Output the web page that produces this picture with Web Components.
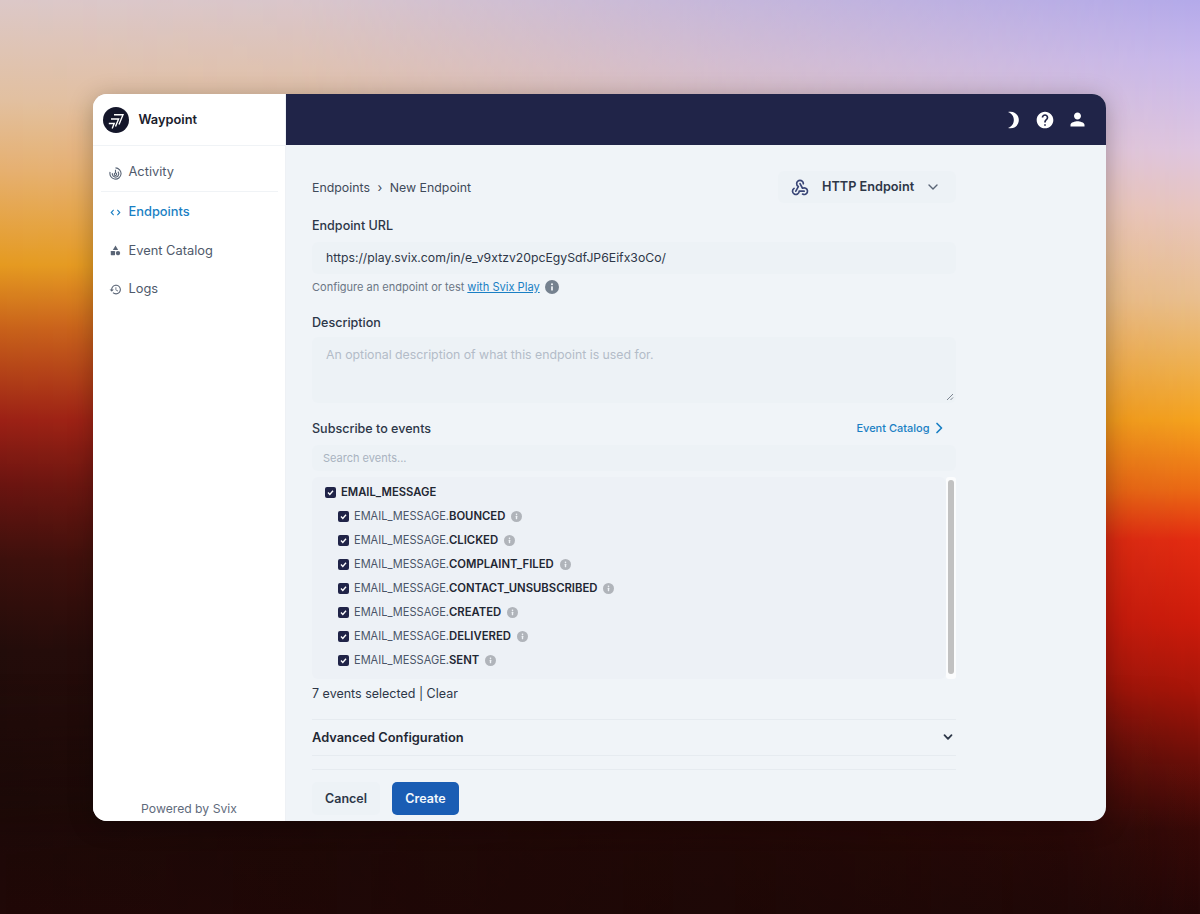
<!DOCTYPE html>
<html lang="en"><head><meta charset="utf-8"><title>Waypoint</title>
<style>
html,body{margin:0;height:914px;overflow:hidden}
body{font-family:Inter,"Liberation Sans",sans-serif;background:#1c0a08}
</style></head><body>
<wp-desktop>
  <wp-window>
    <wp-sidebar slot="side">
      <wp-nav-item icon="activity">Activity</wp-nav-item>
      <wp-nav-item icon="code" active>Endpoints</wp-nav-item>
      <wp-nav-item icon="catalog">Event Catalog</wp-nav-item>
      <wp-nav-item icon="history">Logs</wp-nav-item>
    </wp-sidebar>
    <wp-topbar slot="top"></wp-topbar>
    <wp-endpoint-form slot="main">
      <wp-event-row head name="EMAIL_MESSAGE"></wp-event-row>
      <wp-event-row name="BOUNCED"></wp-event-row>
      <wp-event-row name="CLICKED"></wp-event-row>
      <wp-event-row name="COMPLAINT_FILED"></wp-event-row>
      <wp-event-row name="CONTACT_UNSUBSCRIBED"></wp-event-row>
      <wp-event-row name="CREATED"></wp-event-row>
      <wp-event-row name="DELIVERED"></wp-event-row>
      <wp-event-row name="SENT"></wp-event-row>
    </wp-endpoint-form>
  </wp-window>
</wp-desktop>
<script>
const ICONS={
 activity:'<svg viewBox="0 0 14 14" fill="none" stroke="currentColor" stroke-width="1.2"><path d="M7 1a6 6 0 1 1-5.8 4.4"/><path d="M3.6 6.6a3.5 3.5 0 1 0 6-1.6"/><circle cx="7" cy="7.8" r="1.3"/><path d="M7 6.5V3"/></svg>',
 code:'<svg viewBox="0 0 14 14" fill="none" stroke="currentColor" stroke-width="1.4"><path d="M4.6 3.8 1.6 7l3 3.2M9.4 3.8l3 3.2-3 3.2"/></svg>',
 catalog:'<svg viewBox="0 0 14 14" fill="currentColor"><path d="M7 .6 10.4 6.4H3.6z"/><rect x="1" y="7.6" width="5.4" height="5.4" rx=".6"/><circle cx="10.2" cy="10.3" r="2.8"/></svg>',
 history:'<svg viewBox="0 0 24 24" fill="currentColor"><path d="M13 3c-4.97 0-9 4.03-9 9H1l3.89 3.89.07.14L9 12H6c0-3.87 3.13-7 7-7s7 3.13 7 7-3.13 7-7 7c-1.93 0-3.68-.79-4.94-2.06l-1.42 1.42C8.27 19.99 10.51 21 13 21c4.97 0 9-4.03 9-9s-4.03-9-9-9zm-1 5v5l4.28 2.54.72-1.21-3.5-2.08V8H12z"/></svg>',
 moon:'<svg viewBox="0 0 24 24" fill="currentColor"><path d="M9 2c-1.05 0-2.05.16-3 .46 4.06 1.27 7 5.06 7 9.54 0 4.48-2.94 8.27-7 9.54.95.3 1.95.46 3 .46 5.52 0 10-4.48 10-10S14.52 2 9 2z"/></svg>',
 help:'<svg viewBox="0 0 24 24" fill="currentColor"><path d="M12 2C6.48 2 2 6.48 2 12s4.48 10 10 10 10-4.48 10-10S17.52 2 12 2zm1 17h-2v-2h2v2zm2.07-7.75l-.9.92C13.45 12.9 13 13.5 13 15h-2v-.5c0-1.1.45-2.1 1.17-2.83l1.24-1.26c.37-.36.59-.86.59-1.41 0-1.1-.9-2-2-2s-2 .9-2 2H8c0-2.21 1.79-4 4-4s4 1.79 4 4c0 .88-.36 1.68-.93 2.25z"/></svg>',
 person:'<svg viewBox="0 0 24 24" fill="currentColor"><path d="M12 12c2.21 0 4-1.79 4-4s-1.79-4-4-4-4 1.79-4 4 1.79 4 4 4zm0 2c-2.67 0-8 1.34-8 4v2h16v-2c0-2.66-5.33-4-8-4z"/></svg>',
 webhook:'<svg viewBox="0 0 24 24" fill="none" stroke="currentColor" stroke-width="2" stroke-linecap="round" stroke-linejoin="round"><path d="M4.876 13.61a4 4 0 1 0 6.124 3.39h6"/><path d="M15.066 20.502a4 4 0 1 0 1.934-7.502c-.706 0-1.424.179-2 .5l-3-5.5"/><path d="M16 8a4 4 0 1 0-8 0c0 1.506.77 2.818 2 3.5l-3 5.5"/></svg>',
 down:'<svg viewBox="0 0 12 12" fill="none" stroke="currentColor" stroke-width="1.4" stroke-linecap="round" stroke-linejoin="round"><path d="M2 4l4 4 4-4"/></svg>',
 down2:'<svg viewBox="0 0 12 12" fill="none" stroke="currentColor" stroke-width="1.8" stroke-linecap="round" stroke-linejoin="round"><path d="M2.5 4.2 6 7.8l3.5-3.6"/></svg>',
 right:'<svg viewBox="0 0 12 12" fill="none" stroke="currentColor" stroke-width="1.7" stroke-linecap="round" stroke-linejoin="round"><path d="M4 1.5 8.5 6 4 10.5"/></svg>',
 info:'<svg viewBox="0 0 16 16"><circle cx="8" cy="8" r="8" fill="currentColor"/><rect x="7" y="7" width="2" height="5" rx=".6" fill="#f0f4f8"/><circle cx="8" cy="4.8" r="1.2" fill="#f0f4f8"/></svg>',
 logo:'<svg viewBox="0 0 26 26"><circle cx="13" cy="13" r="13" fill="#14162a"/><g fill="none" stroke="#fff" stroke-width="1.4" stroke-linejoin="miter"><path d="M11 7.8H20L16 17.5"/><path d="M8 12H15.6L12.5 19.5"/><path d="M5.8 16.5H11.2L9.2 21.5"/></g></svg>'
};
class Base extends HTMLElement{
  constructor(){super();this.attachShadow({mode:'open'});}
  render(css,html){this.shadowRoot.innerHTML='<style>'+css+'</style>'+html;}
}
class WpDesktop extends Base{connectedCallback(){this.render(`
 :host{display:block;position:relative;width:1200px;height:914px;box-sizing:border-box;padding:94px 94px 93px 93px;overflow:hidden;
  background:linear-gradient(to bottom,#b4aaea 0,#c8b8ec 60px,#dfc6e0 150px,#e8c6c0 210px,#e9bf8e 300px,#efb04c 370px,#f5a31e 420px,#ec6a15 490px,#e42c12 540px,#cf1c0c 620px,#a8160a 690px,#6e100a 760px,#380a08 830px,#240808 914px)}
 :host::before{content:"";position:absolute;inset:0;
  background:linear-gradient(to bottom,#dcc8c8 0,#e2c0a0 100px,#e6b070 170px,#e59a20 265px,#c8601a 330px,#9c2015 420px,#6a1410 485px,#3c100c 560px,#220c0a 650px,#1c0a08 800px,#240808 914px);
  -webkit-mask-image:linear-gradient(to right,#000 0,rgba(0,0,0,.92) 25%,rgba(0,0,0,.45) 60%,transparent 100%);mask-image:linear-gradient(to right,#000 0,rgba(0,0,0,.92) 25%,rgba(0,0,0,.45) 60%,transparent 100%)}
 :host::after{content:"";position:absolute;left:0;right:0;bottom:0;height:240px;
  background:linear-gradient(to left,transparent 0,rgba(28,8,6,.55) 12%,rgba(28,8,6,.75) 40%,rgba(28,8,6,.5) 100%);
  -webkit-mask-image:linear-gradient(to top,#000 25%,transparent 100%);mask-image:linear-gradient(to top,#000 25%,transparent 100%)}
 ::slotted(*){position:relative;z-index:1}
`,'<slot></slot>');}}
class WpWindow extends Base{connectedCallback(){this.render(`
 :host{display:grid;grid-template-columns:193px 1fr;grid-template-rows:51px 1fr;height:727px;border-radius:14px;overflow:hidden;background:#f0f4f8;box-shadow:0 4px 24px rgba(0,0,0,.28)}
 .s{grid-row:1/3;display:block}.s,.t,.m{min-height:0;min-width:0}
`,'<div class="s" part="s"><slot name="side"></slot></div><div class="t"><slot name="top"></slot></div><div class="m"><slot name="main"></slot></div>');}}
class WpSidebar extends Base{connectedCallback(){this.render(`
 :host{display:flex;flex-direction:column;height:727px;background:#fff;box-sizing:border-box;border-right:1px solid #eef1f5;color:#4a5568}
 .brand{height:52px;box-sizing:border-box;border-bottom:1px solid #f0f3f6;display:flex;align-items:center;gap:9.5px;padding:0 0 0 10px;font-size:12.8px;font-weight:600;color:#1a202c;flex:none}
 .brand svg{width:26px;height:26px;display:block}
 nav{display:flex;flex-direction:column;padding:7px 0 0;flex:1}
 footer{font-size:12.2px;color:#5f6b7c;text-align:center;height:25px;line-height:25px;flex:none}
`,`<div class="brand">${ICONS.logo}<span>Waypoint</span></div><nav><slot></slot></nav><footer>Powered by Svix</footer>`);}}
class WpNavItem extends Base{connectedCallback(){const a=this.hasAttribute('active');const k=this.getAttribute('icon');const first=k==='activity';const s=first||k==='history'?13:11;this.render(`
 :host{display:block;margin:0 7px 0 8px}
 .i{display:flex;align-items:center;height:${first?'39px':'38.5px'};box-sizing:border-box;gap:7.5px;padding-left:9px;padding-top:${first?0:2}px;font-size:12.85px;line-height:20px;color:${a?'#1a7fc4':'#4f5a6b'};${first?'border-bottom:1px solid #f0f3f6;':''}font-weight:${a?500:400}}
 .g{width:11px;height:11px;display:flex;align-items:center;justify-content:center;margin-top:${first?2:0}px;color:${a?'#1a7fc4':'#5a6576'}}
 .g svg{width:${s}px;height:${s}px;flex:none;display:block}
`,`<div class="i"><span class="g">${ICONS[k]}</span><slot></slot></div>`);}}
class WpTopbar extends Base{connectedCallback(){this.render(`
 :host{display:flex;height:51px;align-items:center;justify-content:flex-end;background:#202448;color:#fff;padding-right:18px;gap:12px}
 span{display:block;width:20px;height:20px}svg{display:block;width:100%;height:100%}
 .p{width:21px;height:21px}
`,`<span>${ICONS.moon}</span><span>${ICONS.help}</span><span class="p">${ICONS.person}</span>`);}}
class WpEventRow extends Base{connectedCallback(){const h=this.hasAttribute('head');const n=this.getAttribute('name');this.render(`
 :host{display:flex;align-items:center;height:24px;padding-left:${h?13:26}px;font-size:11px;color:#4a5568;white-space:nowrap}
 .c{width:11px;height:11px;border-radius:2px;background:#202448;display:flex;flex:none;margin-right:5px}
 .c svg{width:11px;height:11px;display:block}
 b{font-weight:600;color:#1f2733;font-size:11.3px}
 .t{font-weight:${h?600:400};color:${h?'#1f2733':'#4a5568'};font-size:${h?'11.25px':'11.05px'}}
 .n{width:11px;height:11px;margin-left:6px;color:#b0b4ba;flex:none}.n svg{display:block;width:100%;height:100%}
`,`<span class="c"><svg viewBox="0 0 11 11" fill="none" stroke="#fff" stroke-width="1.4"><path d="M3 5.6 4.8 7.4 8 3.8"/></svg></span>`+
 (h?`<span class="t">${n}</span>`:`<span class="t">EMAIL_MESSAGE.<b>${n}</b></span><span class="n">${ICONS.info}</span>`));}}
class WpEndpointForm extends Base{connectedCallback(){this.render(`
 :host{display:block;height:676px;overflow:hidden;padding:26px 150px 0 26px;box-sizing:border-box;color:#2d3748;font-size:13px}
 .row{display:flex;align-items:center;justify-content:space-between}
 .crumb{font-size:12.35px;color:#3f4a5a;display:flex;gap:7.5px;align-items:center}
 .type{width:178px;height:32px;box-sizing:border-box;background:#edf2f6;border-radius:6px;display:flex;align-items:center;padding-left:12px;font-weight:600;font-size:12.7px;color:#2d3748}
 .type b{font-weight:600;margin-top:-2px}
 .type .w{width:20px;height:20px;color:#3a4677;margin-right:12px}.type .d{width:12px;height:12px;margin-left:13px;color:#5a6576}
 svg{display:block;width:100%;height:100%}
 label,.label{display:block;height:20px;line-height:22px;font-weight:500;font-size:12.55px;color:#2d3748}
 .box{background:#edf2f6;border-radius:6px;padding-left:14px;box-sizing:border-box}
 .url{height:32px;line-height:32px;margin-top:7px;font-size:12.25px;color:#2d3748}
 .help{height:16px;line-height:16px;margin-top:5px;font-size:11px;color:#6b7685;display:flex;align-items:center}
 .help a{color:#1a7fc4;text-decoration:underline;margin-left:3px;font-size:11.1px}
 .help i{width:14px;height:14px;margin-left:5px;color:#75818f;display:block}
 .ta{height:66px;margin-top:5px;padding-top:9px;line-height:18px;font-size:12.3px;color:#b3bcc8;position:relative}
 .grip{position:absolute;right:2px;bottom:2px;width:8px;height:8px}
 .search{height:26px;margin-top:7px;padding-left:11px;line-height:26px;font-size:11px;color:#a9b3c0}
 .link{color:#1a7fc4;font-size:11px;display:flex;align-items:center;font-weight:500;gap:3.5px;padding-right:11px}
 .link span{width:12px;height:12px;display:block}
 .listwrap{display:flex;height:202px;margin-top:6px}
 .list{flex:1;background:#edf1f6;border-radius:6px;padding-top:3px;min-width:0;box-sizing:border-box}
 .track{width:10px;background:#fbfcfd;border-radius:3px;padding:3px 2px 5px;box-sizing:border-box;display:flex}
 .thumb{width:6px;background:#c1c1c1;border-radius:3px;flex:1}
 .count{height:20px;line-height:22px;margin-top:4px;font-size:12.5px;color:#2d3748}
 .acc{margin-top:16px;height:37px;box-sizing:border-box;border-top:1px solid #e6ebf0;border-bottom:1px solid #e6ebf0;padding-bottom:1px;display:flex;align-items:center;justify-content:space-between;font-weight:600;font-size:12.85px;color:#1f2733;padding-right:2px}
 .acc span{width:12px;height:12px;display:block;color:#2d3748}
 hr{border:0;border-top:1px solid #e6ebf0;margin:13px 0 0;height:0}
 .btns{display:flex;gap:12px;margin-top:12px}
 button{font:600 12.5px Inter,"Liberation Sans",sans-serif;height:33px;border:0;border-radius:5px;padding:0}
 .cancel{width:68px;background:#edf2f6;color:#2d3748}.create{width:67px;background:#1a5db4;color:#f4f8fc}
`,`<div class="row"><div class="crumb"><span>Endpoints</span><span>›</span><span>New Endpoint</span></div>
 <div class="type"><span class="w">${ICONS.webhook}</span><b>HTTP Endpoint</b><span class="d">${ICONS.down}</span></div></div>
 <label style="margin-top:12px">Endpoint URL</label>
 <div class="box url">https://play.svix.com/in/e_v9xtzv20pcEgySdfJP6Eifx3oCo/</div>
 <div class="help">Configure an endpoint or test <a>with Svix Play</a><i>${ICONS.info}</i></div>
 <label style="margin-top:17px">Description</label>
 <div class="box ta">An optional description of what this endpoint is used for.<span class="grip"><svg viewBox="0 0 8 8" stroke="#7c8490" fill="none"><path d="M1 7 7 1M4.5 7 7 4.5"/></svg></span></div>
 <div class="row" style="margin-top:15px"><span class="label">Subscribe to events</span><span class="link">Event Catalog<span>${ICONS.right}</span></span></div>
 <div class="box search">Search events...</div>
 <div class="listwrap"><div class="list"><slot></slot></div><div class="track"><div class="thumb"></div></div></div>
 <div class="count">7 events selected | Clear</div>
 <div class="acc">Advanced Configuration<span>${ICONS.down2}</span></div>
 <hr>
 <div class="btns"><button class="cancel">Cancel</button><button class="create">Create</button></div>`);}}
customElements.define('wp-desktop',WpDesktop);
customElements.define('wp-window',WpWindow);
customElements.define('wp-sidebar',WpSidebar);
customElements.define('wp-nav-item',WpNavItem);
customElements.define('wp-topbar',WpTopbar);
customElements.define('wp-event-row',WpEventRow);
customElements.define('wp-endpoint-form',WpEndpointForm);
</script>
</body></html>
